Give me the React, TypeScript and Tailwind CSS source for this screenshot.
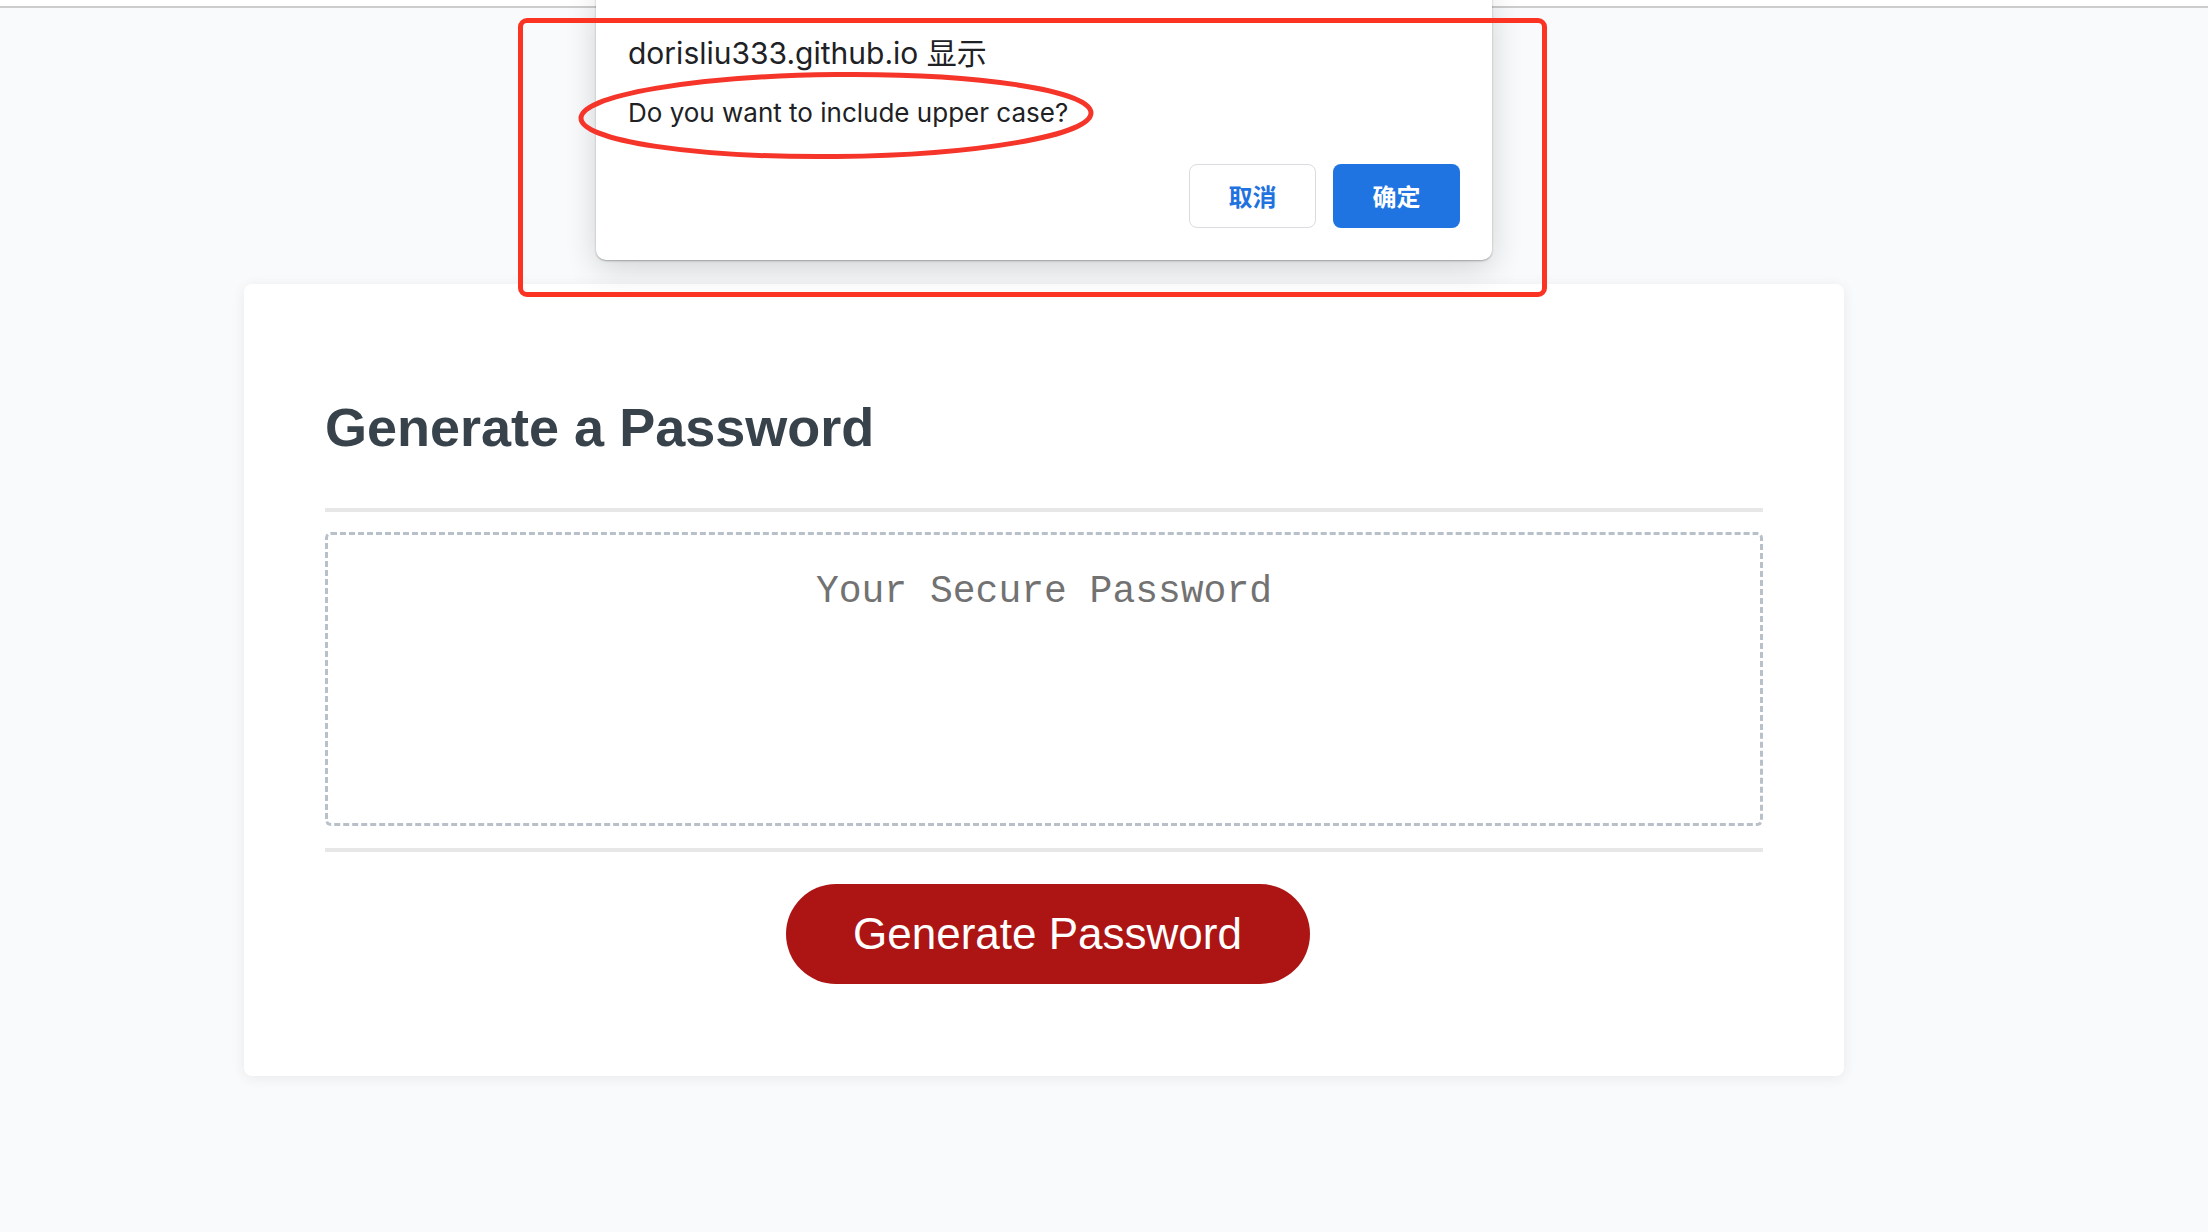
export default function App() {
  return (
    <div className="relative min-h-[1232px] overflow-hidden bg-[#f9fafb] font-['Liberation_Sans',sans-serif]">
      {/* browser chrome edge */}
      <div className="h-[6px] bg-white" />
      <div className="h-[2px] bg-[#cccccc]" />

      {/* password card */}
      <div className="ml-[244px] mt-[276px] w-[1600px] rounded-[8px] bg-white px-[81px] pb-[92px] pt-[116px] shadow-[0_2px_14px_rgba(0,0,0,0.07)]">
        <h2 className="text-[54px] font-bold leading-[54px] text-[#37424b]">
          Generate a Password
        </h2>
        <div className="mt-[54px] h-[4px] bg-[#e7e7e8]" />
        <textarea
          readOnly
          placeholder="Your Secure Password"
          className="mt-[20px] block h-[294px] w-full resize-none rounded-[6px] border-[3px] border-dashed border-[#b8c0ca] bg-white pt-[34px] text-center font-['Liberation_Mono',monospace] text-[38px] leading-[1.2] outline-none placeholder:text-[#727272]"
        />
        <div className="mt-[22px] h-[4px] bg-[#e7e7e8]" />
        <div className="mt-[32px] flex justify-center">
          <button
            type="button"
            className="ml-[7px] h-[100px] w-[524px] rounded-full bg-[#ad1515] text-[44px] text-white"
          >
            Generate Password
          </button>
        </div>
      </div>

      {/* alert dialog */}
      <div className="absolute left-[596px] top-[-10px] flex h-[270px] w-[896px] flex-col rounded-[10px] bg-white px-[32px] pb-[32px] pt-[45px] font-['Inter','Noto_Sans_CJK_SC',sans-serif] text-[#202124] shadow-[0_1px_2px_rgba(0,0,0,0.3),0_8px_32px_rgba(0,0,0,0.16)]">
        <p className="text-[30px] leading-[36px]">dorisliu333.github.io 显示</p>
        <p className="mt-[26px] text-[26px] leading-[32px]">
          Do you want to include upper case?
        </p>
        <div className="mt-auto flex justify-end gap-[17px]">
          <button
            type="button"
            className="h-[64px] w-[127px] rounded-[8px] border border-[#dadce0] bg-white font-['Noto_Sans_CJK_SC',sans-serif] text-[24px] font-bold text-[#1f72e0]"
          >
            取消
          </button>
          <button
            type="button"
            className="h-[64px] w-[127px] rounded-[8px] bg-[#1f74e2] font-['Noto_Sans_CJK_SC',sans-serif] text-[24px] font-bold text-white"
          >
            确定
          </button>
        </div>
      </div>

      {/* annotations */}
      <div className="pointer-events-none absolute left-[518px] top-[18px] h-[279px] w-[1029px] rounded-[9px] border-[5px] border-[#fa3323]" />
      <svg
        className="pointer-events-none absolute left-[574px] top-[68px]"
        width="526"
        height="96"
        viewBox="0 0 526 96"
      >
        <ellipse cx="262" cy="47.5" rx="255" ry="41" fill="none" stroke="#f5352a" strokeWidth="5" transform="rotate(-0.6 262 47.5)" />
      </svg>
    </div>
  );
}
